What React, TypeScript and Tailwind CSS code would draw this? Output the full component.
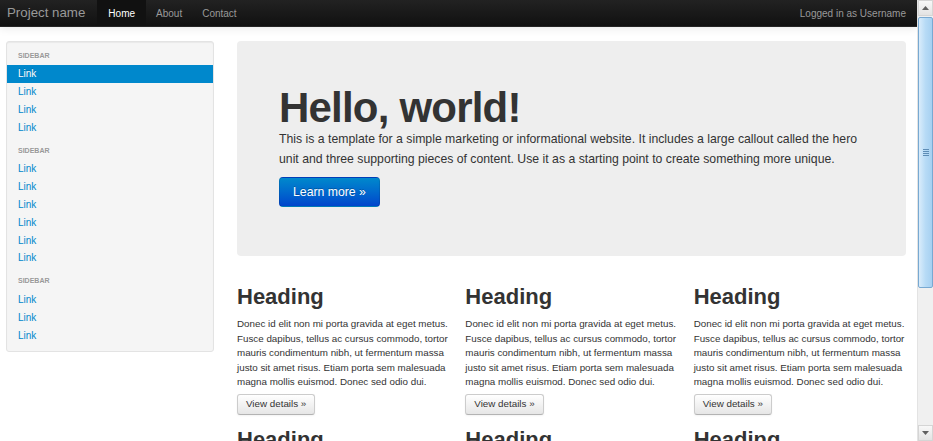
import React from 'react';

const sidebarGroups = [
  { title: 'Sidebar', links: ['Link', 'Link', 'Link', 'Link'], active: 0 },
  { title: 'Sidebar', links: ['Link', 'Link', 'Link', 'Link', 'Link', 'Link'], active: -1 },
  { title: 'Sidebar', links: ['Link', 'Link', 'Link'], active: -1 },
];

const columnText =
  'Donec id elit non mi porta gravida at eget metus. Fusce dapibus, tellus ac cursus commodo, tortor mauris condimentum nibh, ut fermentum massa justo sit amet risus. Etiam porta sem malesuada magna mollis euismod. Donec sed odio dui.';

const Navbar = () => (
  <header className="flex h-[27px] items-stretch border-b border-[#252525] bg-gradient-to-b from-[#222222] to-[#111111] shadow-[0_1px_10px_rgba(0,0,0,0.1)]">
    <a className="flex items-center pl-[7px] pr-[12px] text-[13.3px] text-[#999999]">Project name</a>
    <nav className="flex items-stretch text-[10px]">
      <a className="flex items-center bg-[#111111] px-[11px] text-white">Home</a>
      <a className="flex items-center px-[10px] text-[#999999]">About</a>
      <a className="flex items-center px-[10px] text-[#999999]">Contact</a>
    </nav>
    <p className="ml-auto flex items-center pr-[11px] text-[10px] text-[#999999]">Logged in as Username</p>
  </header>
);

const Sidebar = () => (
  <aside className="w-[208px] shrink-0 self-start rounded-[3px] border border-[#e3e3e3] bg-[#f5f5f5] pb-[7px] pt-[5px] shadow-[inset_0_1px_1px_rgba(0,0,0,0.05)]">
    {sidebarGroups.map((group, g) => (
      <div key={g} className={g > 0 ? 'mt-[6px]' : ''}>
        <div className="flex h-[17.8px] items-center px-[11px] text-[7px] font-bold uppercase text-[#999999] [text-shadow:0_1px_0_rgba(255,255,255,0.5)]">
          {group.title}
        </div>
        {group.links.map((link, i) => (
          <a
            key={i}
            className={
              i === group.active
                ? 'flex h-[18px] items-center bg-[#0088cc] px-[11px] text-[10px] text-white [text-shadow:0_-1px_0_rgba(0,0,0,0.2)]'
                : 'flex h-[17.8px] items-center px-[11px] text-[10px] text-[#0088cc]'
            }
          >
            {link}
          </a>
        ))}
      </div>
    ))}
  </aside>
);

const Hero = () => (
  <div className="rounded-[4px] bg-[#eeeeee] px-[42px] pb-[49px] pt-[46px]">
    <h1 className="text-[42px] font-bold leading-[42px] tracking-[-0.8px] text-[#333333]">Hello, world!</h1>
    <p className="text-[12.25px] leading-[20px]">
      This is a template for a simple marketing or informational website. It includes a large callout called the hero
      unit and three supporting pieces of content. Use it as a starting point to create something more unique.
    </p>
    <a className="mt-[8px] flex h-[30px] w-fit items-center rounded-[4px] border border-[rgba(0,0,0,0.1)] bg-gradient-to-b from-[#0088cc] to-[#0044cc] px-[13px] text-[12.25px] text-white [text-shadow:0_-1px_0_rgba(0,0,0,0.25)]">
      Learn more »
    </a>
  </div>
);

const Column = () => (
  <div>
    <h2 className="mb-[6px] text-[22px] font-bold leading-[28px] text-[#333333]">Heading</h2>
    <p className="mb-[4px] text-[9.8px] leading-[14.5px]">{columnText}</p>
    <a className="flex h-[21px] w-fit items-center rounded-[3px] border border-[#cccccc] border-b-[#b3b3b3] bg-gradient-to-b from-white to-[#e6e6e6] px-[8px] text-[9.8px] text-[#333333] shadow-[inset_0_1px_0_rgba(255,255,255,0.2),0_1px_2px_rgba(0,0,0,0.05)]">
      View details »
    </a>
  </div>
);

const Scrollbar = () => (
  <div className="flex w-[16px] shrink-0 flex-col border-l border-[#e3e3e3] bg-[#f0f0f0]">
    <div className="flex h-[16px] items-center justify-center border border-[#d5d5d5] bg-gradient-to-b from-[#f8f8f8] to-[#e3e3e3]">
      <svg width="7" height="4" viewBox="0 0 7 4">
        <path d="M0 4 L3.5 0 L7 4 Z" fill="#606060" />
      </svg>
    </div>
    <div className="mt-[1px] flex h-[271px] items-center justify-center rounded-[2px] border border-[#78a9d2] bg-gradient-to-r from-[#d9ecfb] via-[#b7dbf6] to-[#a6d0f1]">
      <div className="flex flex-col gap-[1px]">
        <div className="h-px w-[6px] bg-[#5e8db6]" />
        <div className="h-px w-[6px] bg-[#5e8db6]" />
        <div className="h-px w-[6px] bg-[#5e8db6]" />
        <div className="h-px w-[6px] bg-[#5e8db6]" />
      </div>
    </div>
    <div className="flex-1" />
    <div className="flex h-[16px] items-center justify-center border border-[#d5d5d5] bg-gradient-to-b from-[#f8f8f8] to-[#e3e3e3]">
      <svg width="7" height="4" viewBox="0 0 7 4">
        <path d="M0 0 L7 0 L3.5 4 Z" fill="#606060" />
      </svg>
    </div>
  </div>
);

const App = () => {
  return (
    <div className="flex h-[441px] w-[933px] overflow-hidden bg-white font-['Liberation_Sans',Arial,sans-serif] text-[#333333]">
      <div className="w-[917px] shrink-0">
        <Navbar />
        <div className="flex gap-[23px] pl-[6px] pr-[11px] pt-[14px]">
          <Sidebar />
          <main className="w-[669px] shrink-0">
            <Hero />
            <div className="mt-[27px] grid grid-cols-3 gap-x-[16px] gap-y-[11px]">
              <Column />
              <Column />
              <Column />
              <Column />
              <Column />
              <Column />
            </div>
          </main>
        </div>
      </div>
      <Scrollbar />
    </div>
  );
};

export default App;
